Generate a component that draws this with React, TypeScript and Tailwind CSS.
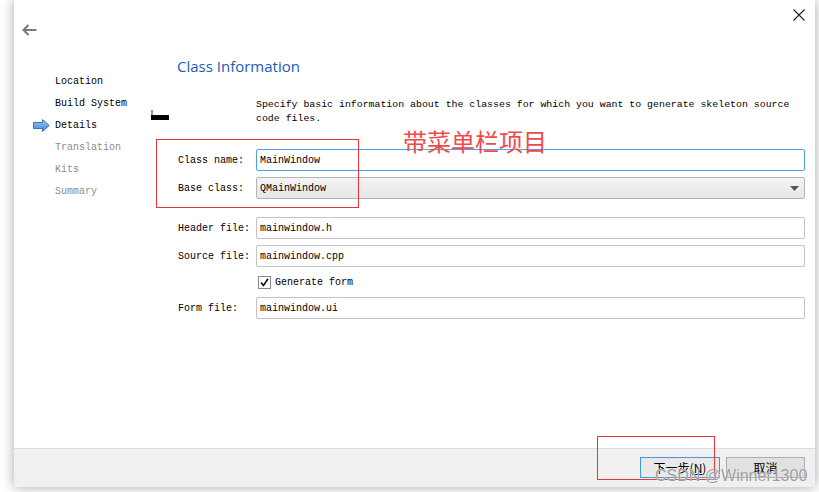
import React from 'react';

const mono = "font-['Liberation_Mono','DejaVu_Sans_Mono',monospace]";

const steps = [
    { label: 'Location', done: true },
    { label: 'Build System', done: true },
    { label: 'Details', done: true, current: true },
    { label: 'Translation', done: false },
    { label: 'Kits', done: false },
    { label: 'Summary', done: false },
];

const StepArrow: React.FC = () => (
    <svg width="17" height="13" viewBox="0 0 17 13">
        <defs>
            <linearGradient id="ag" x1="0" y1="0" x2="0" y2="1">
                <stop offset="0" stopColor="#9cc8f4" />
                <stop offset="1" stopColor="#3d86d8" />
            </linearGradient>
        </defs>
        <path d="M0.5 3.5 H9.5 V0.5 L16.2 6.5 L9.5 12.5 V9.5 H0.5 Z" fill="url(#ag)" stroke="#3a73b8" strokeWidth="1" />
    </svg>
);

const TextField: React.FC<{ value: string; focused?: boolean }> = ({ value, focused }) => (
    <div
        className={`flex-1 h-[22px] flex items-center px-[3px] bg-white rounded-[2px] border ${
            focused ? 'border-[#4aa3ea]' : 'border-[#c4c4c4]'
        } text-[10px] text-black ${mono}`}
    >
        {value}
    </div>
);

const Row: React.FC<{ label: string; children: React.ReactNode }> = ({ label, children }) => (
    <div className="flex items-center">
        <div className={`w-[79px] pl-[1px] pt-[1px] text-[10px] text-black ${mono}`}>{label}</div>
        {children}
    </div>
);

export default function App() {
    return (
        <div className="relative w-[819px] h-[492px] bg-white overflow-hidden">
            <div className="ml-[14px] w-[801px] h-[487px] bg-white flex flex-col shadow-[0_0_12px_rgba(0,0,0,0.35)]">
                {/* header */}
                <div className="h-[56px] flex justify-between">
                    <div className="pl-[8px] pt-[24px]">
                        <svg width="15" height="12" viewBox="0 0 15 12">
                            <path d="M1.5 6 H14.5 M6.5 1 L1.5 6 L6.5 11" fill="none" stroke="#7a7a7a" strokeWidth="2" />
                        </svg>
                    </div>
                    <div className="pr-[10px] pt-[9px]">
                        <svg width="12" height="12" viewBox="0 0 12 12">
                            <path d="M0.5 0.5 L11.5 11.5 M11.5 0.5 L0.5 11.5" stroke="#222" strokeWidth="1.1" />
                        </svg>
                    </div>
                </div>

                <div className="flex flex-1">
                    {/* sidebar */}
                    <div className="w-[163px] pl-[19px] pt-[14px]">
                        {steps.map((s) => (
                            <div key={s.label} className="flex items-center h-[22px]">
                                <div className="w-[22px] flex items-center">{s.current && <StepArrow />}</div>
                                <span className={`text-[10px] ${mono} ${s.done ? 'text-black' : 'text-[#8c8c8c]'}`}>
                                    {s.label}
                                </span>
                            </div>
                        ))}
                    </div>

                    {/* page */}
                    <div className="flex-1 pr-[10px]">
                        <div className="h-[20px] leading-[20px] text-[15px] text-[#1d5bb5] font-['Open_Sans',sans-serif]">
                            Class Information
                        </div>
                        <div className={`mt-[22px] pl-[79px] text-[9.9px] leading-[14px] text-black ${mono}`}>
                            Specify basic information about the classes for which you want to generate skeleton source
                            code files.
                        </div>

                        <div className="mt-[23px] flex flex-col gap-[6px]">
                            <Row label="Class name:">
                                <TextField value="MainWindow" focused />
                            </Row>
                            <Row label="Base class:">
                                <div
                                    className={`flex-1 h-[22px] flex items-center justify-between px-[3px] rounded-[2px] border border-[#b4b4b4] bg-gradient-to-b from-[#f4f4f4] to-[#e6e6e6] text-[10px] text-black ${mono}`}
                                >
                                    <span>QMainWindow</span>
                                    <svg width="9" height="5" viewBox="0 0 9 5" className="mr-[2px]">
                                        <path d="M0 0 H9 L4.5 5 Z" fill="#555" />
                                    </svg>
                                </div>
                            </Row>
                        </div>

                        <div className="mt-[18px] flex flex-col gap-[6px]">
                            <Row label="Header file:">
                                <TextField value="mainwindow.h" />
                            </Row>
                            <Row label="Source file:">
                                <TextField value="mainwindow.cpp" />
                            </Row>
                            <div className="h-[18px] flex items-center pl-[81px]">
                                <div className="w-[13px] h-[13px] border border-[#8a8a8a] bg-white flex items-center justify-center">
                                    <svg width="9" height="9" viewBox="0 0 9 9">
                                        <path d="M1 4.5 L3.5 7.5 L8 0.8" fill="none" stroke="#111" strokeWidth="1.6" />
                                    </svg>
                                </div>
                                <span className={`ml-[4px] text-[10px] text-black ${mono}`}>Generate form</span>
                            </div>
                            <Row label="Form file:">
                                <TextField value="mainwindow.ui" />
                            </Row>
                        </div>
                    </div>
                </div>

                {/* footer */}
                <div className="h-[39px] border-t border-[#dcdcdc] bg-[#f0f0f0] flex items-start justify-end gap-[6px] pt-[8px] pr-[10px]">
                    <button className="w-[80px] h-[21px] border border-[#3c9be8] bg-[#e9e9e9] text-[12px] leading-[19px] text-black font-['Noto_Sans_CJK_SC',sans-serif]">
                        下一步(<span className="underline">N</span>)
                    </button>
                    <button className="w-[79px] h-[21px] border border-[#adadad] bg-[#e1e1e1] text-[12px] leading-[19px] text-black font-['Noto_Sans_CJK_SC',sans-serif]">
                        取消
                    </button>
                </div>
            </div>

            {/* annotations over the screenshot */}
            <div className="absolute left-[151px] top-[110px] w-[2px] h-[5px] bg-[#9a9a9a]" />
            <div className="absolute left-[151px] top-[115px] w-[18px] h-[5px] bg-black" />
            <div className="absolute left-[156px] top-[139px] w-[203px] h-[69px] border border-[#e53535]" />
            <div className="absolute left-[403px] top-[126px] text-[24px] leading-[30px] text-[#f04a4a] font-['Noto_Sans_CJK_SC',sans-serif]">
                带菜单栏项目
            </div>
            <div className="absolute left-[597px] top-[436px] w-[118px] h-[44px] border border-[#e53535]" />
            <div className="absolute left-[655px] top-[466px] text-[16px] leading-[20px] text-[#9d9d9d] font-['Liberation_Sans',sans-serif] [text-shadow:0_0_1px_#ffffff]">
                CSDN @Winner1300
            </div>
        </div>
    );
}
